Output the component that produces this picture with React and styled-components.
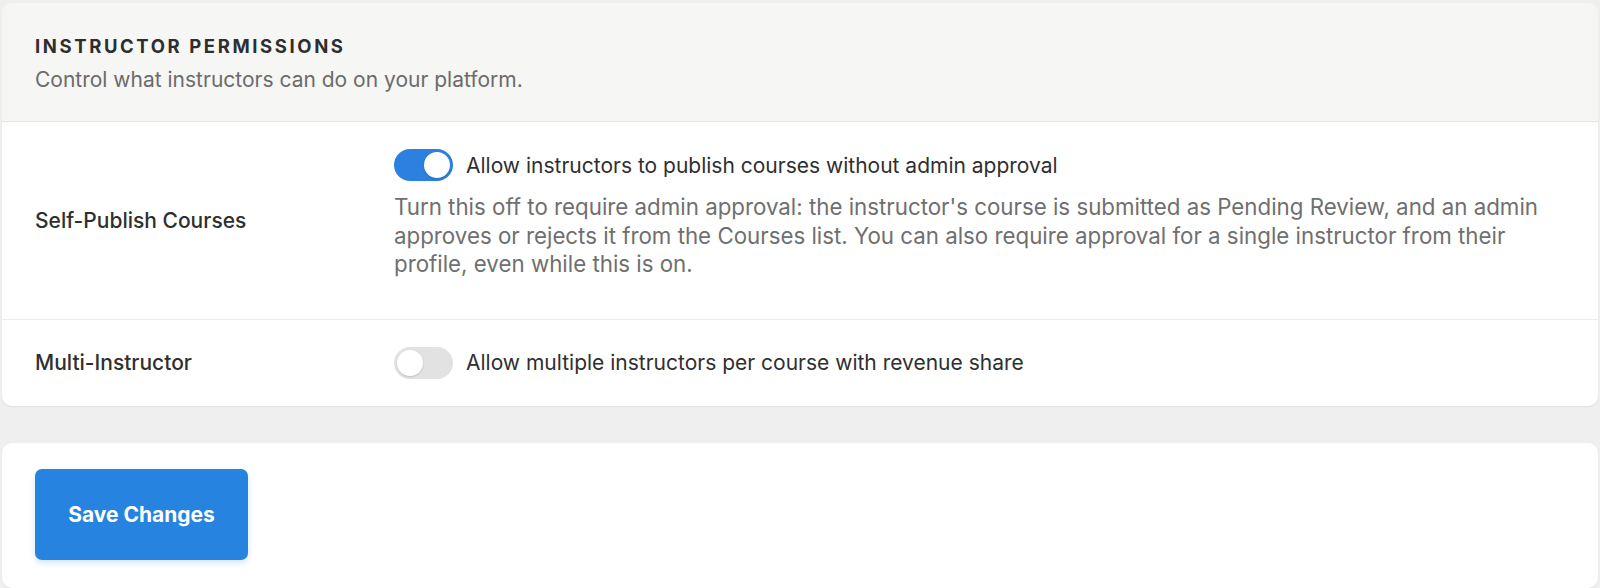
import React, { useState } from "react";
import styled, { createGlobalStyle } from "styled-components";

const GlobalStyle = createGlobalStyle`
  html, body {
    margin: 0;
    padding: 0;
    background: #efefef;
  }
  body {
    font-family: Inter, "Noto Sans", "Liberation Sans", sans-serif;
    -webkit-font-smoothing: antialiased;
  }
`;

const Page = styled.div`
  display: flex;
  flex-direction: column;
  gap: 37px;
  padding: 3px 2px 0 2px;
`;

const Card = styled.section`
  background: #fff;
  border-radius: 10px;
  box-shadow: 0 1px 2px rgba(0, 0, 0, 0.06);
  overflow: hidden;
`;

const Header = styled.header`
  background: #f6f6f5;
  border-bottom: 1px solid #e4e4e3;
  padding: 31px 33px 28px;
`;

const Title = styled.h2`
  margin: 0;
  font-size: 18.5px;
  line-height: 24px;
  font-weight: 700;
  letter-spacing: 2.6px;
  text-transform: uppercase;
  color: #2e2e2e;
`;

const Subtitle = styled.p`
  margin: 9px 0 0;
  font-size: 21px;
  line-height: 26px;
  color: #6b6b6b;
`;

const Row = styled.div`
  display: grid;
  grid-template-columns: 359px 1fr;
  align-items: center;
  padding: 27px 33px;
  & + & {
    border-top: 1px solid #ececec;
  }
`;

const Label = styled.div`
  font-size: 21px;
  font-weight: 500;
  color: #2f2f2f;
`;

const Control = styled.div`
  display: flex;
  flex-direction: column;
`;

const ToggleLine = styled.label`
  display: flex;
  align-items: center;
  gap: 13px;
  font-size: 21px;
  color: #2f2f2f;
  cursor: pointer;
`;

const Track = styled.span`
  position: relative;
  flex: none;
  width: 59px;
  height: 32px;
  border-radius: 16px;
  background: ${(p) => (p.$on ? "#2b80e0" : "#e2e2e2")};
  transition: background 0.2s;
`;

const Knob = styled.span`
  position: absolute;
  top: 3px;
  left: ${(p) => (p.$on ? "30px" : "3px")};
  width: 26px;
  height: 26px;
  border-radius: 50%;
  background: #fff;
  box-shadow: 0 1px 2px rgba(0, 0, 0, 0.15);
  transition: left 0.2s;
`;

const Description = styled.p`
  margin: 12px 0 13px;
  font-size: 22.3px;
  line-height: 28.5px;
  color: #6f6f6f;
`;

const Footer = styled(Card)`
  padding: 26px 33px 28px;
`;

const SaveButton = styled.button`
  width: 213px;
  height: 91px;
  border: none;
  border-radius: 7px;
  background: #2783e0;
  color: #fff;
  font-family: inherit;
  font-size: 21px;
  font-weight: 700;
  box-shadow: 0 3px 6px rgba(39, 131, 224, 0.2);
  cursor: pointer;
`;

const Toggle = ({ on, onChange, children }) => (
  <ToggleLine onClick={() => onChange(!on)}>
    <Track $on={on}>
      <Knob $on={on} />
    </Track>
    {children}
  </ToggleLine>
);

export default function App() {
  const [selfPublish, setSelfPublish] = useState(true);
  const [multi, setMulti] = useState(false);

  return (
    <>
      <GlobalStyle />
      <Page>
        <Card>
          <Header>
            <Title>Instructor Permissions</Title>
            <Subtitle>Control what instructors can do on your platform.</Subtitle>
          </Header>

          <Row>
            <Label>Self-Publish Courses</Label>
            <Control>
              <Toggle on={selfPublish} onChange={setSelfPublish}>
                Allow instructors to publish courses without admin approval
              </Toggle>
              <Description>
                Turn this off to require admin approval: the instructor's course is submitted as
                Pending Review, and an admin approves or rejects it from the Courses list. You can
                also require approval for a single instructor from their profile, even while this is on.
              </Description>
            </Control>
          </Row>

          <Row>
            <Label>Multi-Instructor</Label>
            <Control>
              <Toggle on={multi} onChange={setMulti}>
                Allow multiple instructors per course with revenue share
              </Toggle>
            </Control>
          </Row>
        </Card>

        <Footer>
          <SaveButton>Save Changes</SaveButton>
        </Footer>
      </Page>
    </>
  );
}
